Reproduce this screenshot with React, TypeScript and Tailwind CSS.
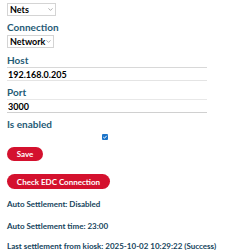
import { ChevronDown } from "lucide-react";

function FakeSelect({ value, width }: { value: string; width: string }) {
  return (
    <div
      className={`flex items-center justify-between h-[13px] border border-[#d4d4d4] bg-white pl-[2px] pr-[1px] ${width}`}
    >
      <span className="text-[9px] font-bold text-black leading-none whitespace-nowrap">{value}</span>
      <ChevronDown className="w-[7px] h-[7px] shrink-0 text-[#777]" strokeWidth={2} />
    </div>
  );
}

export default function App() {
  return (
    <div
      className="w-[250px] h-[250px] bg-white overflow-hidden px-[7px] pt-[3px]"
      style={{ fontFamily: "Lato, 'Liberation Sans', sans-serif" }}
    >
      <FakeSelect value="Nets" width="w-[49px]" />

      <div className="mt-[5px] text-[10px] font-bold text-[#1f5b76] leading-[12px]">Connection</div>
      <div className="mt-[2px]">
        <FakeSelect value="Network" width="w-[47px]" />
      </div>

      <div className="mt-[6px] text-[10px] font-bold text-[#1f5b76] leading-[12px]">Host</div>
      <input
        readOnly
        value="192.168.0.205"
        className="mt-[1px] block w-[200px] h-[14px] border-t border-t-[#d8d8d8] border-b border-b-[#e4e4e4] bg-white px-[1px] text-[9px] font-bold text-black outline-none"
      />

      <div className="mt-[5px] text-[10px] font-bold text-[#1f5b76] leading-[12px]">Port</div>
      <input
        readOnly
        value="3000"
        className="mt-[1px] block w-[200px] h-[14px] border-t border-t-[#e8e8e8] border-b border-b-[#d0d0d0] bg-white px-[1px] text-[9px] font-bold text-black outline-none"
      />

      <div className="mt-[5px] text-[10px] font-bold text-[#1f5b76] leading-[12px]">Is enabled</div>
      <div className="mt-[4px] flex justify-center w-[196px]">
        <div className="w-[6px] h-[6px] rounded-[1px] bg-[#1a73c9] flex items-center justify-center">
          <svg viewBox="0 0 6 6" className="w-[6px] h-[6px]">
            <path d="M1.3 3.1 L2.5 4.2 L4.7 1.8" stroke="white" strokeWidth="1" fill="none" />
          </svg>
        </div>
      </div>

      <button className="mt-[7px] block h-[14px] w-[36px] rounded-full bg-[#d4112e] text-white text-[8px] font-bold leading-none">
        Save
      </button>

      <button className="mt-[13px] block h-[15px] w-[103px] rounded-full bg-[#d4112e] text-white text-[8px] font-bold leading-none">
        Check EDC Connection
      </button>

      <div className="mt-[10px] text-[8px] font-bold text-[#15445c] leading-[10px]">Auto Settlement: Disabled</div>
      <div className="mt-[12px] text-[8px] font-bold text-[#15445c] leading-[10px]">Auto Settlement time: 23:00</div>
      <div className="mt-[10px] text-[8px] font-bold text-[#15445c] leading-[10px] whitespace-nowrap">
        Last settlement from kiosk: 2025-10-02 10:29:22 (Success)
      </div>
    </div>
  );
}
